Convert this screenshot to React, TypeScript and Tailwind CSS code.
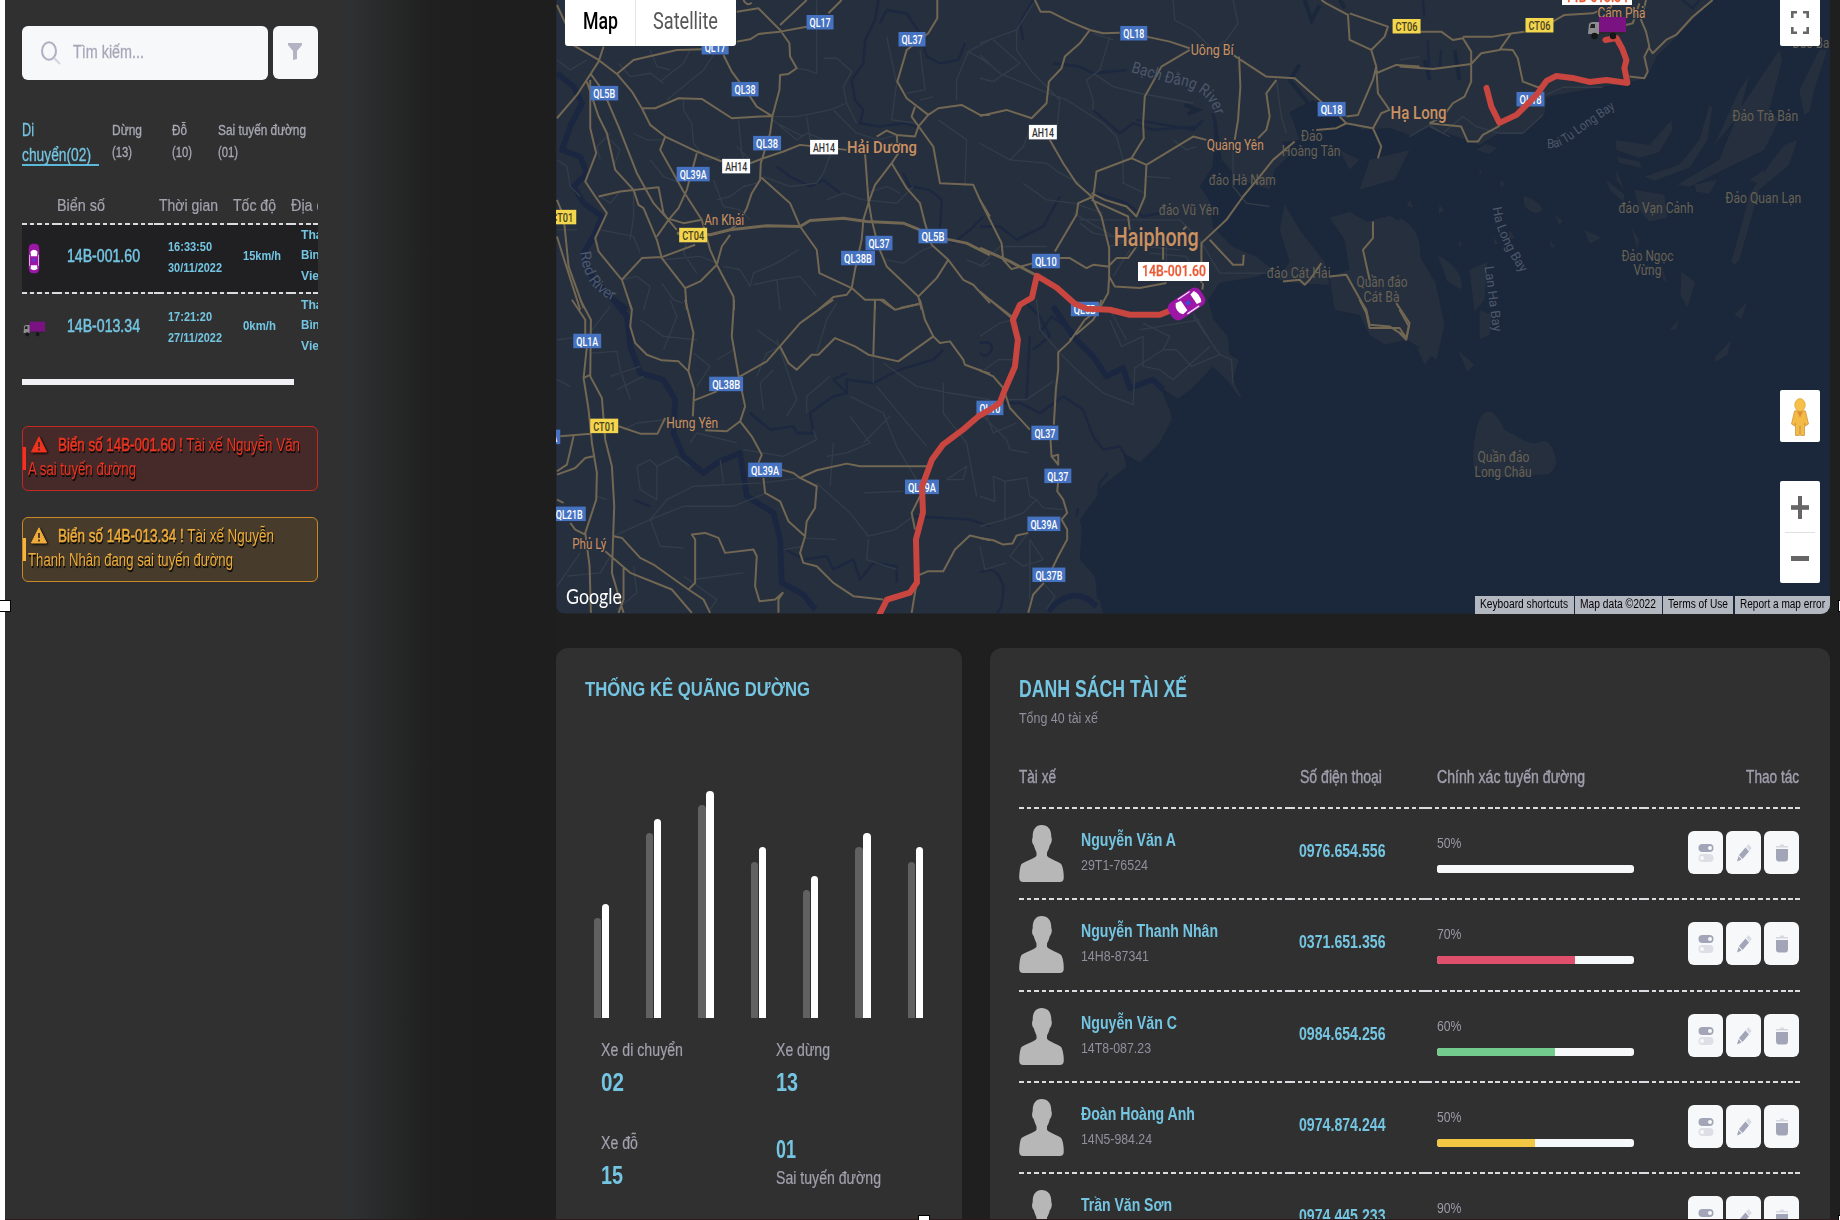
import { useLayoutEffect, useRef, useState } from "react";
import type { ReactNode } from "react";

/** Condensed single-line text: the glyphs are squeezed horizontally to fill `w` pixels. */
function Fit({ w, className = "", right = false, children }: { w: number; className?: string; right?: boolean; children: ReactNode }) {
  const ref = useRef<HTMLSpanElement>(null);
  const [k, setK] = useState(1);
  useLayoutEffect(() => {
    if (ref.current && ref.current.offsetWidth) setK(w / ref.current.getBoundingClientRect().width);
  }, []);
  return (
    <span className={"flex shrink-0 " + (right ? "justify-end " : "") + className} style={{ width: w }}>
      <span ref={ref} className={"inline-block whitespace-nowrap " + (right ? "origin-right" : "origin-left")} style={{ transform: `scaleX(${k})` }}>
        {children}
      </span>
    </span>
  );
}

function DashRow({ cells }: { cells: number[] }) {
  return (
    <div className="flex h-[2px] overflow-hidden">
      {cells.map((c, i) => (
        <div key={i} className="flex shrink-0" style={{ width: c }}>
          <div className="flex-1 bg-[repeating-linear-gradient(90deg,#dcdce0_0,#dcdce0_4.7px,transparent_4.7px,transparent_7.6px)]" />
          <div className="w-[4.5px] bg-[#dcdce0]" />
        </div>
      ))}
    </div>
  );
}

function Car({ className, rot }: { className: string; rot: number }) {
  return (
    <svg viewBox="-12 -21 24 42" className={className} preserveAspectRatio="none">
      <g transform={`rotate(${rot})`}>
        <rect x="-10.500" y="-20" width="21" height="40" rx="7" fill="#9c17a6" />
        <path d="M-7-9Q0-15 7-9L6-3H-6Z" fill="#fff" />
        <path d="M-6 9H6L7 14Q0 18-7 14Z" fill="#fff" />
        <path d="M-9-5V10M9-5V10" stroke="#f3d5f5" strokeWidth="1.500" />
        <rect x="-2" y="0" width="4" height="4" fill="#2b55e0" />
      </g>
    </svg>
  );
}

function Truck({ className }: { className: string }) {
  return (
    <svg viewBox="0 0 39 24" className={className} preserveAspectRatio="none">
      <path d="M1 18L2 8Q3 6 6 6H12V18Z" fill="#8d8d8f" />
      <path d="M3 12L4 8H8V12Z" fill="#222" />
      <rect x="12" y="1" width="27" height="15.500" fill="#7a1282" />
      <rect x="12" y="16" width="26" height="2" fill="#2a2a2c" />
      <circle cx="7.500" cy="20" r="3.200" fill="#161616" />
      <circle cx="26" cy="20" r="3.200" fill="#161616" />
    </svg>
  );
}

function AlertIcon() {
  return (
    <svg viewBox="0 0 16 17" className="mt-[3px] ml-[3px] h-[17px] w-4 shrink-0 drop-shadow-[1px_1px_1px_#000]" preserveAspectRatio="none">
      <path d="M8 .8L15.600 16H.4Z" fill="currentColor" stroke="currentColor" strokeLinejoin="round" />
      <path d="M8 6V11M8 12.600V14.400" stroke="#3a2a26" strokeWidth="1.700" />
    </svg>
  );
}

const CELLS = [35, 102, 74, 58, 27];

function Sidebar() {
  return (
    <aside className="w-[550.5px] shrink-0 bg-[linear-gradient(90deg,#303030_0,#303030_335px,#2f3032_346px,#262727_388px,#202020_425px,#1e1e1e_470px)] pt-[26px] pl-[16.5px]">
      <div className="w-[296px]">
        <div className="flex gap-[5px]">
          <div className="flex h-[54px] w-[246px] rounded-md bg-[#f6f8fa]">
            <svg viewBox="0 0 20 24" className="mt-[15px] ml-[19px] h-6 w-5" fill="none" preserveAspectRatio="none">
              <ellipse cx="8" cy="10" rx="7" ry="8.800" stroke="#aeb0c1" strokeWidth="2" />
              <path d="M13 17L19 23" stroke="#d3d5e0" strokeWidth="2.200" />
            </svg>
            <Fit w={71} className="mt-[17px] ml-3 text-[18px] leading-[18px] text-[#a6a7b8] [-webkit-text-stroke:0.3px]">Tìm kiếm...</Fit>
          </div>
          <div className="h-[53px] w-[45px] rounded-md bg-[#f6f8fa]">
            <svg viewBox="0 0 14 18" className="mt-4 ml-[15px] h-[18px] w-[14px]" preserveAspectRatio="none">
              <path d="M0 1H14V3L9 9V17L5 18V9L0 3Z" fill="#b2b4c3" />
            </svg>
          </div>
        </div>

        <div className="mt-[36px] flex text-[14px] leading-[21.5px] text-[#a9a9b6] [-webkit-text-stroke:0.3px]">
          <div className="h-[50px] w-[77px] border-b-2 border-[#5bb8d8] pt-[1.5px] text-[18px] leading-[25px] text-[#74c5e2]">
            <Fit w={12}>Di</Fit>
            <Fit w={69}>chuyển(02)</Fit>
          </div>
          <div className="mt-[4px] ml-[13px] w-[60px]">
            <Fit w={30}>Dừng</Fit>
            <Fit w={20}>(13)</Fit>
          </div>
          <div className="mt-[4px] w-[46px]">
            <Fit w={15}>Đỗ</Fit>
            <Fit w={20}>(10)</Fit>
          </div>
          <div className="mt-[4px]">
            <Fit w={88}>Sai tuyến đường</Fit>
            <Fit w={20}>(01)</Fit>
          </div>
        </div>

        <div className="overflow-hidden">
          <div className="flex h-[56.5px] pt-[31px] pl-[35px] text-[17px] leading-[17px] text-[#a3a2ae] [-webkit-text-stroke:0.2px]">
            <Fit w={48} className="mr-[54px]">Biển số</Fit>
            <Fit w={59} className="mr-[15px]">Thời gian</Fit>
            <Fit w={43} className="mr-[15px]">Tốc độ</Fit>
            <Fit w={44}>Địa chỉ</Fit>
          </div>
          <DashRow cells={CELLS} />
          {VEHICLES.map((v, i) => (
            <div key={v.plate}>
              {i === 1 && <DashRow cells={CELLS} />}
              <div className={"flex text-[13.5px] font-bold text-[#74c5e2] " + (i === 0 ? "h-[67px] bg-[#202023]" : "h-[85px] pt-[1px]")}>
                <div className="w-[45px] shrink-0">
                  {i === 0 ? <Car rot={0} className="mt-[18px] ml-[6px] h-[31px] w-3" /> : <Truck className="mt-[26px] ml-[1px] h-[16px] w-[22px]" />}
                </div>
                <Fit w={73} className="mt-[23px] mr-[28px] text-[17.5px] leading-[17.5px] font-normal [-webkit-text-stroke:0.5px]">{v.plate}</Fit>
                <div className="mt-[11px] w-[75px] shrink-0 leading-[21px]">
                  <Fit w={44}>{v.time}</Fit>
                  <Fit w={54}>{v.date}</Fit>
                </div>
                <div className="mt-[24.5px] w-[58px] shrink-0 leading-[13.5px]">
                  <Fit w={v.sw}>{v.speed}</Fit>
                </div>
                <div className="shrink-0 leading-[20.7px]">
                  <Fit w={25}>Thái</Fit>
                  <Fit w={29}>Bình,</Fit>
                  <Fit w={47}>Vietnam</Fit>
                </div>
              </div>
            </div>
          ))}
        </div>
        <div className="h-[6px] w-[272px] bg-[#f0f0f5]" />

        <div className="relative mt-[41px] h-[65px] rounded-md border border-[#c22720] bg-[#462a29] pt-[6.5px] pl-[5px] text-[17.5px] leading-6 text-[#f0331f] [text-shadow:1px_2px_1px_#000]">
          <span className="absolute top-[20px] left-0 h-[23px] w-[3px] bg-[#f5301f]" />
          <div className="flex">
            <AlertIcon />
            <Fit w={242} className="ml-[11px]"><span className="[-webkit-text-stroke:0.5px]">Biển số 14B-001.60 !</span> Tài xế Nguyễn Văn</Fit>
          </div>
          <Fit w={108}>A sai tuyến đường</Fit>
        </div>
        <div className="relative mt-[26px] h-[65px] rounded-md border border-[#c98927] bg-[#473c2b] pt-[6.5px] pl-[5px] text-[17.5px] leading-6 text-[#efac3a] [text-shadow:1px_2px_1px_#000]">
          <span className="absolute top-[20px] left-0 h-[23px] w-[3px] bg-[#f7b43c]" />
          <div className="flex">
            <AlertIcon />
            <Fit w={216} className="ml-[11px]"><span className="[-webkit-text-stroke:0.5px]">Biển số 14B-013.34 !</span> Tài xế Nguyễn</Fit>
          </div>
          <Fit w={205}>Thanh Nhân đang sai tuyến đường</Fit>
        </div>
      </div>
    </aside>
  );
}

const VEHICLES = [
  { plate: "14B-001.60", time: "16:33:50", date: "30/11/2022", speed: "15km/h", sw: 38 },
  { plate: "14B-013.34", time: "17:21:20", date: "27/11/2022", speed: "0km/h", sw: 33 },
];

/* ---------- map ---------- */

// Each tile is drawn at three times its size and placed at [x, y].
const TILES: { at: [number, number]; river: string; thick?: string; minor: string; road: string; wide?: string }[] = [
  {
    at: [550, 0],
    river: "M985 0L975 60L945 120L940 190L905 240L915 300L940 330L930 370L990 380L1060 370L1100 380M990 70L1010 30L1070 40L1110 100L1130 170L1170 190L1225 180L1245 130M1060 520L1080 560L1140 570L1175 600L1170 690L1210 730L1260 690L1300 650M680 500L720 530L780 560L820 540L870 580",
    thick: "M20 220L70 260L95 310L60 380L35 450L90 470L110 520L70 560L100 610L155 650L130 710L100 760L130 840L190 900L230 930",
    minor: "M20 180L60 210L110 180M20 480L50 500L60 560L90 590M400 300L400 330L425 370L430 430M205 190L240 230L300 220L340 250M330 245L400 190L420 150M300 150L320 200L360 210M800 0L800 220L770 210L740 205M820 175L860 175L905 215L880 260L890 310L920 370M675 350L740 350L840 330L890 310M850 330L920 400L985 420L1040 405M1220 300L1220 240L1255 155L1320 120M1255 155L1300 180L1320 195M1165 360L1250 420L1245 560M1110 150L1125 270L1070 280M1010 110L1040 250L1025 360L1100 370M670 360L740 420L770 400L850 430M680 370L760 410M560 440L600 480M565 360L575 460L600 520M430 430L470 480L510 470M500 600L540 590L580 560L620 550M490 540L520 620L570 630L600 660M640 530L720 560L800 550L820 520L850 440M830 600L880 580L940 600L1040 610L1090 560M950 580L1010 560L1050 580M600 860L570 810L520 800M600 860L610 820L680 790L745 750M610 855L680 840L750 830L800 890M680 840L690 930M1010 780L1060 790L1120 750L1150 740M150 690L250 710L270 760M215 840L260 830L300 860L280 930M335 850L370 900L400 910M340 780L450 770L500 790M180 420L210 450L190 500M250 400L290 420L340 420M150 480L140 440L180 400M250 570L250 650L240 720M210 575L180 610L150 590M300 480L340 530L380 545M20 690L80 690M1250 780L1300 800L1320 790M1110 300L1150 290M770 350L780 420M440 820L400 760L410 720M500 150L460 210L350 300",
    road: "M60 130L145 180L200 222L245 275L275 325L300 375L345 410L440 455L515 485M600 490L640 475L700 455L750 435L890 450M200 222L250 180L380 150L455 148M560 125L600 118L625 102L690 95L770 80M560 35L625 25L690 90L718 130L720 170L740 205L715 222L690 225L688 270L668 345L660 400L632 490L630 540L605 580L590 625L565 670L540 690M275 325L315 325L385 295L455 297L545 355L665 348M520 165L545 215L600 290L620 320L665 348M690 75L770 0M835 40L875 0M1162 0L1162 55L1135 100L1070 150L1042 245L1070 295L1135 345L1165 325L1235 315L1290 345L1320 345M1135 345L1105 380L1095 410L1040 405L1010 392L980 410M1095 320L1085 350L1110 385L1150 440L1170 550L1270 555L1290 600L1320 650M1040 405L1045 460L1025 490L975 555L955 610L940 660L935 720L915 810L905 865L890 885L850 892L805 930M945 460L955 600L965 660L985 740L1010 800L1105 890L1115 930M1025 490L1070 565L1110 610L1125 670L1145 735L1195 780L1240 840L1270 855L1320 910M1195 780L1160 835L1105 890M630 530L720 610L750 680L800 750L808 820L905 865L945 900L1000 900L1035 930M975 900L975 930M1050 925L1110 912M20 355L80 285L145 185L160 140M120 220L160 275L205 380L260 520L310 610L350 655L380 690M120 240L120 385L138 460L105 545L135 590L170 640L135 715L145 755L215 840L245 930M110 245L145 350L170 400L195 510L250 570L265 615L280 625L320 720L335 775L405 865L410 930M145 590L210 575L325 562L340 640L355 660L385 625L410 570L440 460M345 410L330 450L400 575L455 660L480 750L500 795L550 890L552 930M355 660L320 710M350 655L400 670L455 660M215 840L275 775L335 772L435 735M405 865L450 845L500 795L515 740L540 705M20 600L40 650L55 800L100 925M20 710L45 790L90 930M20 15L50 80M580 0Q590 20 605 8",
    wide: "M380 700L480 705L540 690L650 678L750 680L780 662L880 655L950 665L1060 670L1110 690M1190 718L1250 730L1320 765",
  },
  {
    at: [980, 0],
    river: "M160 0L120 70L130 120M700 340L710 420L705 500L680 560L690 600L740 650L770 720M0 680L60 680L110 720L190 680L240 590M350 580L440 610L490 650L540 640M220 190L300 200L340 220L440 210M650 380L520 390L460 370L420 400L340 330M470 360L640 390L670 360M180 1000L215 950L260 980L300 1010",
    minor: "M0 130L110 90L160 10M0 165L60 220L180 270L260 300L370 370L410 410L430 480L430 550L495 580M110 90L110 150L160 220L240 300L230 400M390 110L360 210L320 240L340 300L340 330M340 220L400 260L480 280L640 310M90 480L200 490L240 520L300 550M0 430L90 480L130 440L150 390M130 550L200 600L280 610L370 640M300 660L450 660M450 660L600 660L660 720L720 820L860 820M580 0L585 60L640 90L700 150M760 0L775 70L740 120L700 150M500 530L570 535M0 235L40 245L120 190L40 120M890 240L905 350L920 400M340 100L400 120M650 440L620 450L580 420M760 430L760 560L800 610L870 620M280 640L420 720L500 740L600 750M460 700L560 740L560 800M300 670L340 700L450 720L390 740M400 830L450 750M510 760L620 770L650 830M640 940L690 1020M390 930L440 1020M0 800L60 740L110 740L200 740M480 990L600 970L660 960",
    road: "M165 0L182 35L210 35L270 65L330 90L370 100L420 98M500 110L570 125L630 145M330 90L300 130L255 170L245 205L207 245L200 310L155 355L80 330L0 348M630 150L545 200L495 290L490 370L492 415L455 475M455 475L350 515L340 595M455 475L500 495L640 410L680 420M500 495L495 590L470 650L440 620L375 600L335 580M210 420L250 490L290 550L335 590L365 650L388 745L388 830L405 860L480 865L560 850M335 600L445 650L450 690M340 590L295 610L290 645L225 755M388 830L385 880L340 960L270 1020M235 775L270 775L320 805L340 795L385 800L410 775L445 775L470 740M760 165L860 230L945 235L1030 310M890 240L860 280L870 350L860 390L835 415M778 170L782 260L775 360L765 420M1080 350L1100 370L1180 385L1205 440L1195 475M1100 370L1070 385L1010 390M1100 350L1135 345L1180 240L1190 200L1175 150L1110 120L1105 45L1040 10L1025 0M1110 40L1225 80L1215 110L1175 150L1190 200L1195 280L1230 330L1205 340L1180 385M1190 220L1250 195L1320 200M945 425L880 480L840 530L790 590L740 660L665 730L665 850M690 720L760 795L790 795L792 765M610 690L620 680M1050 830L1100 825L1145 905L1160 930L1170 975L1230 980L1280 1012M0 600L30 660L65 730L70 780L95 808L160 790M1180 665L1180 715L1150 750L1170 840M910 845L960 840L975 855L990 840L1025 790M550 700L550 780M670 850L668 870M0 875L95 955",
    wide: "M0 745L90 785L172 828",
  },
  {
    at: [1400, 0],
    river: "M90 240L85 120M120 200L125 150M70 0L75 50M850 0L880 25L900 0",
    minor: "M30 410L90 375L130 400L190 350L230 380L300 400L370 400L430 345M440 285L490 262L610 262M0 180L60 170M90 380L150 410",
    road: "M60 95L125 95L160 120L190 115L215 155L215 245L195 290L160 310L130 350L90 370M190 110L280 110L340 100L375 95M460 65L495 45L580 40L605 30M0 200L100 207L215 192L245 160L300 150L335 100M300 148L340 150L355 175L370 245L415 262L440 255M680 75L700 70L720 10M740 0L725 60L740 95L750 140L735 170L745 215L735 235L690 230M750 145L760 160L800 120L830 105L880 50L940 0M90 370L185 380L205 425L235 425L250 405L300 378M0 930L28 980L20 1020L0 1000",
  },
  {
    at: [550, 300],
    river: "M700 745L760 780L830 770L850 810L910 780L930 840L970 790L1040 800L1040 850M600 340L660 390L730 380L740 400L790 400L780 340L850 290L890 280L890 240L970 250L1050 210L1150 180L1180 150M890 280L850 240L890 220M250 600L300 620M1090 650L1260 660L1320 680",
    thick: "M190 0L230 50L240 140L270 220L340 240L375 300L370 400L400 470L460 520L500 490L570 460L590 590L670 640L690 720L695 850L760 885L795 930",
    minor: "M20 120L110 110L180 20M120 160L200 155L210 210L240 300M200 270L280 230M20 240L60 260M340 150L380 50L360 0M270 60L340 110L440 120M500 180L550 150M440 260L480 200L430 160M620 230L650 160L690 140L620 90M680 120L740 300L710 350M640 330L630 250L670 210M770 340L770 290L840 230M900 290L1000 340L1040 440L1100 540M970 250L970 170M900 350L960 430L890 460L830 470M1020 350L940 430M980 260L1080 380L1130 440M1180 250L1180 340L1250 430L1280 590M1000 190L1100 260L1200 280L1320 300M350 360L260 370L220 390M420 430L440 400L560 430M580 450L700 470L800 420L790 390M260 500L300 480L320 500L320 600L270 570L260 500M320 500L380 470L420 500M510 480L520 550M300 660L400 620L550 620L650 580M300 660L350 600L430 560L640 550L750 535M190 710L300 660L330 740L400 745M800 550L900 640L955 710L1035 690L1090 650M955 720L950 780L1040 810M940 580L1060 575M760 715L860 720M700 750L760 740M430 840L580 820M400 830L500 900L480 930M140 590L170 600M200 930L260 880L250 800M840 560L850 430M270 200L180 230M1190 540L1250 500L1240 540L1190 540M860 10L830 60L800 160M50 830L150 820L180 770M20 860L90 760",
    road: "M65 0L105 60L105 110M90 0L122 60L120 230L155 295L165 420L185 500L192 620L185 820L220 940M110 140L100 235L115 330L125 430L140 520L138 600L105 700L118 800L122 940M100 235L120 225M205 380L270 402L322 402L345 355M235 0L245 30L240 80L255 130L290 165L335 182L385 185L415 215M405 0L430 100L415 215L432 270L428 350M552 0L545 110L565 225L585 320L570 365L530 395L465 392M432 302L500 275M570 230L650 185L750 70L820 20L850 0M690 140L715 190L740 210L785 165L805 165L855 115L915 140L955 165L1045 185L1150 110L1125 60L1110 0M975 0L970 165M990 0L1035 30L1110 12M1150 110L1170 130L1200 125L1240 180L1245 195L1320 222M570 365L605 410L635 465L625 490M640 535L645 580L690 605L715 665L765 710L750 760L760 790L800 800L850 850L910 890L1000 900M695 510L730 520L750 535L800 560L795 625L770 665L765 710M750 535L800 512L890 492L930 500L1135 500M1110 590L1085 640L1095 690M1100 830L1135 815L1180 815L1215 750L1260 708L1320 722M1100 850L1095 880L1085 940M20 525L75 505L105 475L130 470M20 515L50 495L70 410M30 410L120 402M60 670L75 690L105 705M190 710L215 715L270 775L310 795L415 870L460 900L480 940M165 755L240 820L365 870L425 940M415 870L435 850L435 720L425 705L465 700L505 715L525 760L610 750L620 770L615 860L628 905L675 900L698 880L685 900L685 940M220 800L220 900L205 940M20 600L40 610",
  },
  {
    at: [980, 300],
    river: "M130 0L180 50L210 110L160 150M0 130Q40 120 35 150Q20 180 0 160M40 310L120 310L180 340L250 290L310 330L340 410L370 450L420 440L445 480M355 580L360 550L385 520M0 820Q50 790 70 860Q70 930 50 940M290 650L295 625M150 110L140 300M350 830L355 900",
    thick: "M220 20L280 110L340 170L380 230L430 205L450 265L520 240L550 270M205 935Q280 850 350 920",
    minor: "M170 0L180 90L240 160L300 220L370 280L460 315L465 205L550 150L590 150L635 200L720 165M640 50L720 165L755 180L760 250M390 60L425 140L490 110L490 200L540 210L580 240L690 140M490 70L570 110L550 150M0 340L80 420L90 450L145 460M110 370L40 400L20 350M0 590L45 605L40 530L75 545L75 660L0 680M75 545L140 535L150 590L170 600L130 640L75 660M170 600L190 625L250 630M145 700L90 770L130 800L190 780L150 720L150 900M190 850L225 890L200 930M0 740L15 810L80 790M80 300L140 300L220 245M0 110L60 70L100 60M0 220L55 180L110 180",
    road: "M365 0L355 30L315 60L270 125L235 158L235 210L228 270L222 375M212 420L215 470L235 495L235 465L218 470M235 545L232 575L250 600L262 640L245 660L262 690L262 720L235 770L218 805M192 850L160 885L145 940M0 212L40 230L70 265L90 325L150 390M0 715L40 722L70 735L98 732L110 708L145 700M1250 10L1290 70L1280 115L1260 85L1170 85L1160 40L1140 0M30 0L95 50",
  },
];

const SHIELDS: [string, number, number, number, string][] = [
  ["QL17", 820, 22, 27, "b"], ["QL37", 912, 39, 27, "b"], ["QL17", 715, 47, 27, "b"], ["QL38", 745, 89, 27, "b"], ["QL5B", 604, 93, 28, "b"],
  ["QL38", 767, 143, 28, "b"], ["QL39A", 693, 174, 33, "b"], ["CT01", 562, 217, 28, "y"], ["CT04", 693, 235, 28, "y"], ["QL37", 879, 243, 27, "b"],
  ["QL38B", 858, 258, 34, "b"], ["QL5B", 933, 236, 29, "b"], ["AH14", 736, 166, 28, "w"], ["AH14", 824, 147, 28, "w"], ["QL18", 1134, 33, 27, "b"],
  ["CT06", 1407, 26, 28, "y"], ["AH14", 1043, 132, 28, "w"], ["QL18", 1332, 109, 28, "b"], ["QL10", 1046, 261, 28, "b"], ["QL5B", 1085, 309, 28, "b"],
  ["CT06", 1540, 25, 28, "y"], ["QL18", 1531, 99, 28, "b"], ["QL1A", 587, 341, 28, "b"], ["QL38B", 726, 384, 34, "b"], ["CT01", 604, 426, 28, "y"],
  ["QL39A", 765, 470, 34, "b"], ["QL39A", 922, 487, 34, "b"], ["QL21B", 569, 514, 33, "b"], ["QL10", 990, 408, 27, "b"], ["QL37", 1045, 433, 27, "b"],
  ["QL37", 1058, 476, 27, "b"], ["QL39A", 1044, 524, 33, "b"], ["QL37B", 1049, 575, 33, "b"], ["A", 554, 437, 12, "b"],
];
const FILLS: Record<string, [string, string]> = { b: ["#4673c1", "#fff"], y: ["#f3d54e", "#4a4320"], w: ["#fdfdfd", "#333"] };

const TOWNS: [string, number, number, number, number][] = [
  ["Hải Dương", 847, 917, 153, 17], ["An Khải", 704, 744, 225, 14.5], ["Uông Bí", 1191, 1234, 55, 14.5], ["Quảng Yên", 1207, 1264, 150, 14.5],
  ["Haiphong", 1114, 1199, 246, 25], ["Hạ Long", 1391, 1447, 119, 18], ["Cẩm Phả", 1598, 1646, 18, 14.5], ["Hưng Yên", 666, 718, 428, 14.5], ["Phủ Lý", 572, 606, 549, 14.5],
];
const ISLES: [string, number, number, number][] = [
  ["Đảo", 1301, 1323, 141], ["Hoàng Tân", 1282, 1341, 156], ["đảo Hà Nam", 1209, 1276, 185], ["đảo Vũ Yên", 1159, 1219, 215], ["đảo Cát Hải", 1267, 1331, 278],
  ["Quần đảo", 1357, 1408, 287], ["Cát Bà", 1364, 1400, 302], ["Đảo Trà Bản", 1733, 1799, 121], ["Đảo Quan Lạn", 1726, 1802, 203], ["đảo Vạn Cảnh", 1619, 1694, 213],
  ["Đảo Ngọc", 1622, 1674, 261], ["Vừng", 1634, 1662, 275], ["Đảo Ba", 1793, 1830, 48], ["Quần đảo", 1478, 1530, 462], ["Long Châu", 1475, 1532, 477],
];
const WATERS: [string, string, number, number][] = [
  ["red", "Red River", 62, 15], ["bach", "Bạch Đằng River", 100, 16], ["tu", "Bai Tu Long Bay", 80, 13], ["ha", "Ha Long Bay", 72, 13], ["lan", "Lan Ha Bay", 66, 13],
];

function MapCanvas() {
  return (
    <svg viewBox="556 0 1275 614" className="block h-full w-full font-[Roboto,sans-serif]">
      <defs>
        <path id="red" d="M580 252Q584 292 618 303" />
        <path id="bach" d="M1131 72L1172 84Q1210 88 1216 118" />
        <path id="tu" d="M1548 148Q1560 150 1578 135L1619 106" />
        <path id="ha" d="M1493 208Q1497 238 1523 275" />
        <path id="lan" d="M1485 267L1494 334" />
      </defs>
      <rect x="556" width="1275" height="614" fill="#262f3e" />
      <path
        fill="#1b273a"
        d="M1103 614L1095 577L1080 560L1082 530L1080 520L1097 497L1102 487L1127 467L1123 453L1140 463L1160 443L1172 420L1170 410L1160 387L1178 399L1193 388L1213 367L1227 380L1238 395L1243 400L1233 380L1239 360L1230 355L1228 337L1214 320L1208 300L1220 283L1257 277L1273 270L1257 257L1233 247L1213 227L1210 200L1200 187L1213 167L1216 115L1222 160L1240 180L1270 190L1275 170L1290 155L1283 142L1300 140L1290 112L1313 100L1333 113L1363 130L1390 128L1410 135L1430 127L1450 134L1480 145L1500 133L1523 134L1545 115L1547 97L1600 87L1627 83L1647 78L1657 57L1677 37L1713 0H1831V614Z"
      />
      <g fill="#262f3e">
        <path d="M1330 277L1350 270L1345 240L1330 218L1350 212L1367 222L1390 216L1412 228L1422 260L1436 283L1445 325L1437 360L1420 348L1408 340L1385 345L1370 335L1360 315L1335 310Z" />
        <path d="M1285 205L1300 230L1325 262L1330 285L1300 284L1278 280L1290 262L1280 230ZM1400 218Q1425 230 1420 265L1408 290Q1390 250 1400 218ZM1438 255Q1465 270 1462 290L1448 282ZM1470 270L1488 262L1485 300L1475 312ZM1480 310L1492 315L1490 335L1480 340Z" />
        <path d="M1485 112Q1500 108 1512 118L1540 90L1600 78L1625 78L1622 40L1560 35L1485 60ZM1524 196Q1540 200 1543 210Q1535 218 1525 206ZM1585 230L1602 238L1590 244ZM1340 150L1360 160L1350 170ZM1370 160L1410 150L1395 180L1360 190Z" />
        <path d="M1616 140L1650 145L1672 120L1673 130L1660 152L1640 158L1617 150ZM1617 157L1640 162L1642 168L1620 163ZM1645 177L1680 165L1700 140L1710 105L1713 108L1708 140L1690 168L1655 181ZM1678 185L1720 160L1740 110L1780 50L1783 60L1770 110L1780 120L1765 150L1720 172L1690 187ZM1695 185L1718 180L1710 194L1697 192ZM1715 145L1740 90L1750 75L1740 115ZM1798 140L1790 165L1760 190L1740 260L1735 265L1732 262L1745 215L1750 195L1770 165L1785 145ZM1805 115L1800 90L1820 50L1828 50L1815 90L1810 112ZM1750 180L1765 170L1762 185ZM1607 180L1625 195L1624 202L1610 190ZM1617 170L1625 190L1617 180ZM1635 190L1665 195L1668 218L1650 222L1640 210ZM1632 228L1640 240L1638 250ZM1660 260L1668 283L1664 280ZM1682 272L1696 282L1688 308L1681 295ZM1735 315L1748 302L1742 320ZM1670 330L1680 320L1676 330ZM1715 358L1732 340L1728 355L1717 362Z" />
        <path d="M1478 425Q1482 410 1492 412Q1500 418 1505 430L1525 441Q1535 446 1545 441Q1555 445 1557 463Q1553 476 1545 475L1510 477Q1490 480 1475 470Q1471 455 1478 425Z" />
        <path d="M1458 350L1475 365L1468 372ZM1430 330L1440 345L1425 365L1418 350ZM1460 240l3 5l-4 2ZM1495 238l4 6l-5 1ZM1510 230l5 8l-6 2ZM1555 215l8 6l-3 5ZM1550 240l6 8l-5 -1ZM1440 205l5 6l-6 3ZM1410 200l4 8l-7 -2ZM1480 170l3 3l-3 2ZM1500 180l6 4l-4 4ZM1476 150l10 -6l12 4l-8 6Z" />
      </g>
      <path d="M1310 105L1290 80L1300 65M1330 110L1310 118L1320 100M1305 0L1312 20L1320 5M1340 0L1345 8M1425 60L1430 80M1455 50L1460 80M1185 105L1198 110L1188 114" stroke="#1b273a" strokeWidth="4" fill="none" />
      {TILES.map((t, i) => (
        <g key={i} transform={`translate(${t.at[0]} ${t.at[1]}) scale(.33333)`} fill="none" strokeLinejoin="round">
          <path d={t.river} stroke="#1c2740" strokeWidth="7" />
          {t.thick && <path d={t.thick} stroke="#1b2641" strokeWidth="17" />}
          <path d={t.minor} stroke="#333d49" strokeWidth="4" />
          <path d={t.road} stroke="#726753" strokeWidth="6" />
          {t.wide && <path d={t.wide} stroke="#726753" strokeWidth="9" />}
        </g>
      ))}
      {TOWNS.map(([s, a, b, y, fs]) => (
        <text key={s} x={a} y={y} textLength={b - a} lengthAdjust="spacingAndGlyphs" fontSize={fs} fontWeight={fs > 15 ? 500 : 400} fill="#cb9160" stroke="#262f3e" strokeWidth="2.500" paintOrder="stroke">{s}</text>
      ))}
      {ISLES.map(([s, a, b, y]) => (
        <text key={s + y} x={a} y={y} textLength={b - a} lengthAdjust="spacingAndGlyphs" fontSize="14.500" fill="#676255">{s}</text>
      ))}
      {WATERS.map(([id, s, len, fs]) => (
        <text key={id} fontSize={fs} fill="#4c586b" textLength={len} lengthAdjust="spacingAndGlyphs">
          <textPath href={"#" + id} textLength={len} lengthAdjust="spacingAndGlyphs">{s}</textPath>
        </text>
      ))}
      {SHIELDS.map(([s, x, y, w, c], i) => (
        <g key={i}>
          <rect x={x - w / 2} y={y - 7} width={w} height="14.500" fill={FILLS[c][0]} />
          <text x={x - w / 2 + 3} y={y + 5} textLength={w - 6} lengthAdjust="spacingAndGlyphs" fontSize="12.500" fontWeight="500" fill={FILLS[c][1]}>{s}</text>
        </g>
      ))}
      <g fill="none" stroke="#c8463f" strokeWidth="6" strokeLinejoin="round" strokeLinecap="round">
        <path d="M1170 311L1160 315H1130L1110 310L1087 309L1075 304L1057 288L1037 276L1032 298L1020 305L1013 320L1018 340L1015 367L1005 390L1000 403L990 410L978 417L963 430L943 445L932 460L922 487L923 513L916 540L917 583L910 593L887 600L878 618" />
        <path d="M1606 40L1617 38L1623 49L1627 60L1625 68L1628 83L1607 80L1590 82L1573 78L1557 76L1547 81L1537 95L1517 115L1500 123L1492 107L1487 88" />
      </g>
    </svg>
  );
}

function MapPanel() {
  return (
    <section className="relative h-[613.5px] w-[1274.5px] overflow-hidden rounded-b-[9px] font-[Roboto,sans-serif]">
      <MapCanvas />
      <div className="absolute top-[262px] left-[582.5px] flex h-[19px] w-[71px] justify-center bg-white text-[14.5px] leading-[19px] font-medium text-[#ea5a35] [-webkit-text-stroke:0.3px]">
        <Fit w={64}>14B-001.60</Fit>
      </div>
      <div className="absolute -top-[14px] left-[1006px] flex h-[19px] w-[70px] justify-center bg-white text-[14.5px] leading-[23px] font-medium text-[#ea5a35] [-webkit-text-stroke:0.3px]">
        <Fit w={63}>14B-013.34</Fit>
      </div>
      <Car rot={0} className="absolute top-[284px] left-[619px] h-10 w-[23px] rotate-[236deg]" />
      <Truck className="absolute top-[16px] left-[1031px] h-6 w-[39px]" />

      <div className="absolute top-0 left-[9px] flex h-[46px] w-[171.5px] rounded-b-[3px] bg-white text-[23px] leading-[43px]">
        <Fit w={35} className="ml-[18px] font-medium text-black">Map</Fit>
        <div className="ml-[17px] w-px bg-[#e6e6e6]" />
        <Fit w={65} className="ml-[17.5px] text-[#565656]">Satellite</Fit>
      </div>
      <div className="absolute top-0 right-[10.5px] flex h-[46px] w-[39.5px] rounded-b-[2px] bg-white pt-[11px] pl-[10.5px]">
        <svg viewBox="0 0 18 23" className="h-[23px] w-[18px]" fill="none" stroke="#666" strokeWidth="2.600">
          <path d="M1.300 7V1.300H6M12 1.300H16.700V7M16.700 16V21.700H12M6 21.700H1.300V16" />
        </svg>
      </div>
      <div className="absolute top-[390px] right-[10.5px] h-[52px] w-[39.5px] rounded-[2px] bg-white pt-2 pl-[10.5px]">
        <svg viewBox="0 0 18 38" className="h-[38px] w-[18px]">
          <path d="M3.500 13Q9 11.500 14.500 13L17.500 26L14.500 28L13.500 25V37.500H9.700L9 28L8.300 37.500H4.500V25L3.500 28L.5 26Z" fill="#f3bb45" stroke="#c58f2f" strokeWidth=".7" />
          <ellipse cx="9" cy="7" rx="5.300" ry="6.500" fill="#f6bf47" stroke="#d9a03a" strokeWidth=".6" />
          <path d="M6 13.500H12L9 19.500Z" fill="#e28a3b" />
        </svg>
      </div>
      <div className="absolute top-[481px] right-[10.500px] flex h-[102px] w-[39.5px] flex-col items-center rounded-[2px] bg-white">
        <svg viewBox="0 0 18 23" className="mt-[15px] h-[23px] w-[18px]" stroke="#666" strokeWidth="4"><path d="M9 0V23" /><path d="M0 11.500H18" strokeWidth="4.600" /></svg>
        <div className="mt-[13px] h-[1px] w-[30px] bg-[#e0e0e0]" />
        <div className="mt-[23px] h-[5px] w-[18px] bg-[#666]" />
      </div>
      <div className="absolute bottom-[7px] left-[10px] font-[Lato,sans-serif] text-[21px] leading-[22px] text-white">
        <Fit w={56}>Google</Fit>
      </div>
      <div className="absolute right-0 bottom-0 flex h-[17.5px] gap-[1.5px] font-['Liberation_Sans',sans-serif] text-[12px] leading-[16px] text-black">
        {([["Keyboard shortcuts", 88, 99], ["Map data ©2022", 76, 86.5], ["Terms of Use", 60, 70], ["Report a map error", 85, 95.5]] as [string, number, number][]).map(([s, w, bw]) => (
          <div key={s} className="bg-[#b3b7c0] pl-[5px]" style={{ width: bw }}><Fit w={w}>{s}</Fit></div>
        ))}
      </div>
    </section>
  );
}

/* ---------- statistics ---------- */

const BARS = [8, 14, 16, 12, 10, 13, 12];

function Stat({ label, w, value, vw, flip }: { label: string; w: number; value: string; vw: number; flip?: boolean }) {
  const l = <Fit w={w} className="text-[17.5px] leading-[20px] text-[#a2a1ae] [-webkit-text-stroke:0.2px]">{label}</Fit>;
  const v = <Fit w={vw} className="text-[25.5px] leading-[30px] font-bold text-[#74c5e2]">{value}</Fit>;
  return <div className={"flex flex-col " + (flip ? "gap-[4px] pt-[1px]" : "gap-[7px]")}>{flip ? <>{v}{l}</> : <>{l}{v}</>}</div>;
}

function StatsCard() {
  return (
    <section className="h-[600px] w-[406.5px] shrink-0 rounded-[12px] bg-[#303030] pt-[31px]">
      <Fit w={225} className="ml-[29px] text-[20.5px] leading-[20.5px] font-bold text-[#74c5e2]">THỐNG KÊ QUÃNG DƯỜNG</Fit>
      <div className="mt-[91.5px] ml-[38px] flex h-[227px] items-end gap-[36.85px]">
        {BARS.map((b, i) => (
          <div key={i} className="flex w-[15.5px] items-end gap-[0.5px]">
            <div className="w-[7.5px] rounded-t-[4px] bg-[#616161]" style={{ height: (b - 1) * 14.17 }} />
            <div className="w-[7.5px] rounded-t-[4px] bg-white" style={{ height: b * 14.17 }} />
          </div>
        ))}
      </div>
      <div className="mt-[22.500px] ml-[45.5px] grid grid-cols-[174.5px_auto] gap-y-[35.5px]">
        <Stat label="Xe di chuyển" w={82} value="02" vw={23} />
        <Stat label="Xe dừng" w={54} value="13" vw={22} />
        <Stat label="Xe đỗ" w={37} value="15" vw={22} />
        <Stat label="Sai tuyến đường" w={105} value="01" vw={20} flip />
      </div>
    </section>
  );
}

/* ---------- drivers ---------- */

const DRIVERS = [
  { name: "Nguyễn Văn A", nw: 95, code: "29T1-76524", cw: 67, phone: "0976.654.556", pct: 50, fill: "#f6f8fa", h: 91 },
  { name: "Nguyễn Thanh Nhân", nw: 137, code: "14H8-87341", cw: 68, phone: "0371.651.356", pct: 70, fill: "#df4f6b", h: 92 },
  { name: "Nguyễn Văn C", nw: 96, code: "14T8-087.23", cw: 70, phone: "0984.654.256", pct: 60, fill: "#74cb8e", h: 91 },
  { name: "Đoàn Hoàng Anh", nw: 114, code: "14N5-984.24", cw: 71, phone: "0974.874.244", pct: 50, fill: "#f2c744", h: 91 },
  { name: "Trần Văn Sơn", nw: 91, code: "", cw: 70, phone: "0974.445.233", pct: 90, fill: "#74cb8e", h: 91 },
];
const COLS = [271, 137, 217, 156];

function ActionButton({ children }: { children: ReactNode }) {
  return (
    <div className="flex h-[43px] w-[35px] items-center justify-center rounded-[6px] bg-[#f6f8fa]">
      <svg viewBox="0 0 16 19" className="h-[19px] w-4" preserveAspectRatio="none">{children}</svg>
    </div>
  );
}

function DriverRow({ d }: { d: (typeof DRIVERS)[number] }) {
  return (
    <div className="shrink-0" style={{ height: d.h }}>
      <DashRow cells={COLS} />
      <div className="flex">
        <svg viewBox="0 0 45 52" className="mt-4 h-[57px] w-[45px] shrink-0" preserveAspectRatio="none">
          <path d="M22.500 0C29 0 32.500 4 32.300 11C33.500 13 32.500 17 30.800 18.500C30 22 28.700 24 28 25V28C30 31 40 33 42.500 36C44.500 40 45 46 44.700 49Q44 52 41 52H4Q1 52 .3 49C0 46 .7 38 2.500 35.500C6 33 15 31 17.500 28V25C16.500 23 15.500 21 14.800 18.500C13 17 12.500 14 13.700 11C13.500 4 17 0 22.500 0Z" fill="#b7b7b7" />
        </svg>
        <div className="mt-[20.5px] ml-[17px] w-[218px] shrink-0">
          <Fit w={d.nw} className="text-[18px] leading-[22px] font-bold text-[#74c5e2]">{d.name}</Fit>
          {d.code && <Fit w={d.cw} className="mt-[5px] text-[15.5px] leading-[18px] text-[#918f9d]">{d.code}</Fit>}
        </div>
        <Fit w={86.5} className="mt-[31.5px] text-[18px] leading-[22px] font-bold text-[#74c5e2]">{d.phone}</Fit>
        <div className="mt-[25.5px] ml-[51.500px] w-[197.5px]">
          <Fit w={24.5} className="text-[15.5px] leading-[18px] text-[#9a99a6]">{d.pct + "%"}</Fit>
          <div className="mt-[12.500px] h-[8px] overflow-hidden rounded-[3px] bg-[#f6f8fa]">
            <div className="h-full" style={{ width: d.pct + "%", background: d.fill }} />
          </div>
        </div>
        <div className="mt-[22.5px] ml-[54px] flex gap-[3px]">
          <ActionButton>
            <rect x=".5" y="1" width="15" height="8" rx="4" fill="#a1a5b7" />
            <circle cx="12" cy="5" r="2" fill="#f6f8fa" />
            <rect x=".5" y="11" width="15" height="8" rx="4" fill="#dddfe6" />
            <circle cx="4" cy="15" r="2" fill="#f6f8fa" />
          </ActionButton>
          <ActionButton>
            <path d="M3 12L9.500 4.500L13 8.500L6.500 16Z" fill="#a1a5b7" />
            <path d="M10.200 3.800L12.500 1L15.600 5L13.600 7.800Z" fill="#d9dbe4" />
            <path d="M2.600 13L5.500 16.500L1 18.500Z" fill="#a1a5b7" />
          </ActionButton>
          <ActionButton>
            <path d="M2 6H14V15Q14 18.500 11 18.500H5Q2 18.500 2 15Z" fill="#a1a5b7" />
            <path d="M2 4.500V3H6L6.500 1.500H9.500L10 3H14V4.500Z" fill="#d5d7e0" />
          </ActionButton>
        </div>
      </div>
    </div>
  );
}

function DriversCard() {
  return (
    <section className="flex h-[600px] w-[840.5px] shrink-0 flex-col rounded-[12px] bg-[#303030] pt-[30px] pl-[29px]">
      <Fit w={168} className="text-[23px] leading-[23px] font-bold text-[#74c5e2]">DANH SÁCH TÀI XẾ</Fit>
      <Fit w={79} className="mt-[8px] text-[15.5px] leading-[18px] text-[#918f9d]">Tổng 40 tài xế</Fit>
      <div className="mt-[40.5px] flex h-[39.5px] w-[781px] shrink-0 text-[17.5px] leading-[20px] text-[#a09fae] [-webkit-text-stroke:0.4px]">
        <Fit w={37}>Tài xế</Fit>
        <Fit w={82} className="ml-[244px]">Số điện thoại</Fit>
        <Fit w={148} className="ml-[55px]">Chính xác tuyến đường</Fit>
        <Fit w={53} right className="ml-auto">Thao tác</Fit>
      </div>
      {DRIVERS.map((d) => <DriverRow key={d.phone} d={d} />)}
    </section>
  );
}

export default function App() {
  return (
    <div className="relative flex h-[1220px] w-[1840px] overflow-hidden bg-[#1e1f1e] font-['Liberation_Sans',sans-serif]">
      <div className="w-[5px] shrink-0 bg-white" />
      <Sidebar />
      <main className="w-[1284px] shrink-0">
        <MapPanel />
        <div className="mt-[34px] flex gap-[27.5px]">
          <StatsCard />
          <DriversCard />
        </div>
      </main>
      <div className="absolute right-0 bottom-0 left-[5px] h-px bg-[#2a1a1c]" />
      <div className="absolute top-[600px] -left-[2px] h-3 w-[13px] border border-black bg-white" />
      <div className="absolute top-[600px] left-[1838px] h-3 w-3 border border-black bg-white" />
      <div className="absolute top-[1215px] left-[918px] h-3 w-3 border border-black bg-white" />
      <div className="absolute top-[1215px] left-[1838px] h-3 w-3 border border-black bg-white" />
    </div>
  );
}
